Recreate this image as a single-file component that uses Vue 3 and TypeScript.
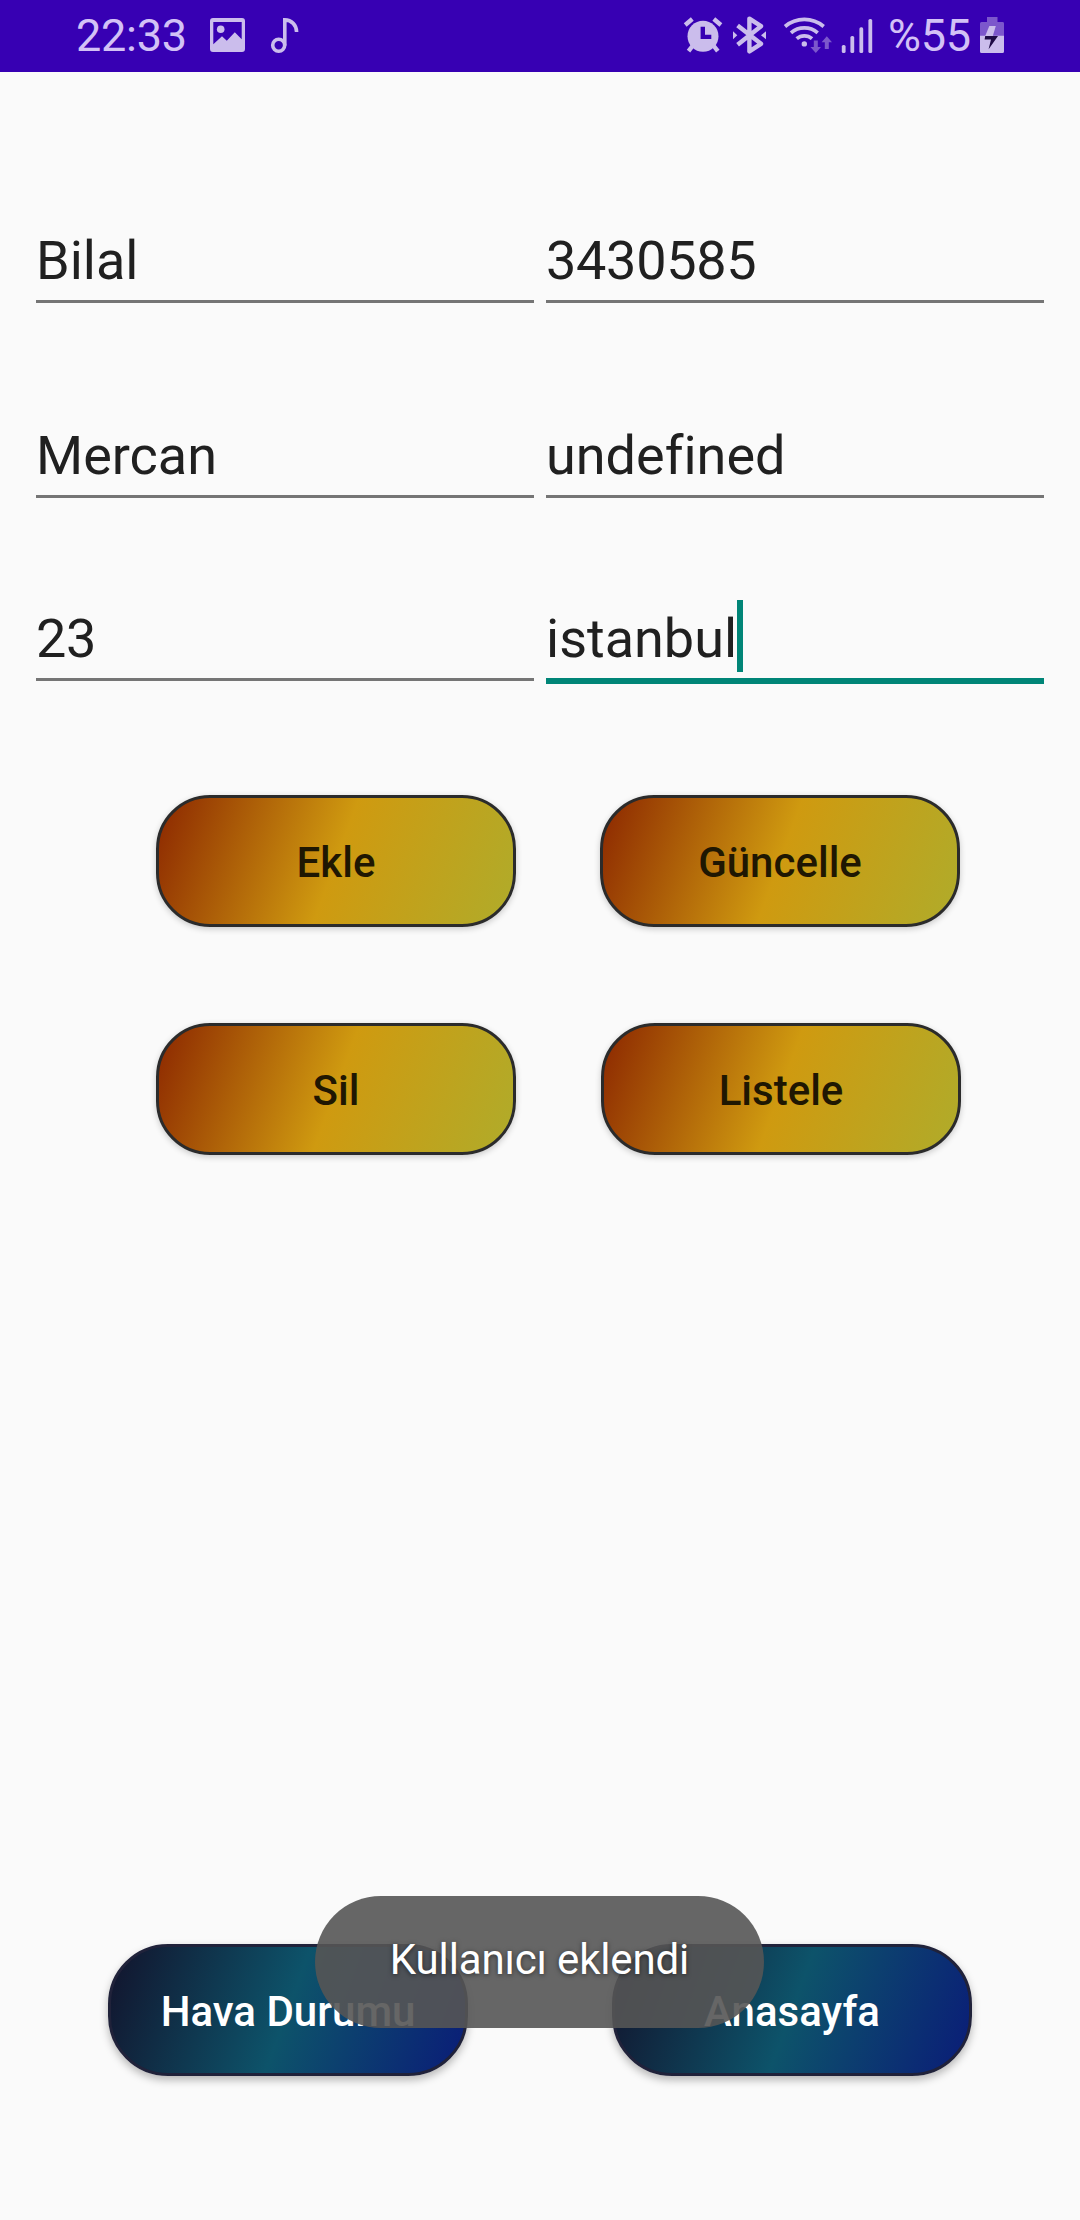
<script setup lang="ts">
interface Field {
  id: string
  value: string
  numeric?: boolean
  focused?: boolean
}

const rows: Field[][] = [
  [{ id: 'name', value: 'Bilal' }, { id: 'phone', value: '3430585', numeric: true }],
  [{ id: 'surname', value: 'Mercan' }, { id: 'mail', value: 'undefined' }],
  [{ id: 'age', value: '23', numeric: true }, { id: 'city', value: 'istanbul', focused: true }],
]
</script>

<template>
  <div class="screen">
    <header class="status">
      <span class="clock">22:33</span>
      <svg class="left-icons" width="90" height="72" viewBox="210 0 90 72">
        <path
          fill="#cbbdec" fill-rule="evenodd"
          d="M213 18H242a3 3 0 0 1 3 3V49a3 3 0 0 1-3 3H213a3 3 0 0 1-3-3V21a3 3 0 0 1 3-3ZM213.3 22V44.3L222 36.3L226.8 40.8L234.8 32.3L241.7 39.3V22Z"
        />
        <circle cx="220.7" cy="29.3" r="3.8" fill="#cbbdec" />
        <g fill="none" stroke="#cbbdec" stroke-width="3.6">
          <circle cx="278.7" cy="45.2" r="6" />
          <path d="M284.8 45.5V19.9C291.5 20 296.6 25 296.6 32" />
        </g>
      </svg>
      <svg class="right-icons" width="200" height="72" viewBox="680 0 200 72">
        <g fill="none" stroke="#cbbdec" stroke-width="4.4">
          <circle cx="703" cy="36.3" r="15.5" fill="#cbbdec" stroke="none" />
          <path d="M685.2 25L692.3 19M713.8 19L720.9 25M692.5 46L688.5 51.2M713.8 46L717.8 51.2" />
          <path d="M702.8 26.7V36.9H711.3" stroke="#3700b3" />
          <path d="M737.6 25.4L761 43.8L749.4 51.4V18.6L761 26.2L737.6 44.8" stroke-linejoin="round" />
        </g>
        <path fill="#cbbdec" d="M733 31.3V39.3L737.3 35.3ZM766 31.3V39.3L761 35.3Z" />
        <g fill="none" stroke="#cbbdec" stroke-width="3.7">
          <path d="M785 26.5A30 30 0 0 1 823.7 26.5" />
          <path d="M791 32.8A20.5 20.5 0 0 1 817.7 32.8" />
          <path d="M796.7 38.7A11.5 11.5 0 0 1 812 38.7" />
        </g>
        <circle cx="804.3" cy="43.9" r="2.7" fill="#cbbdec" />
        <g fill="#7c57cc">
          <path d="M813.8 40.5H817.8V47H821L815.8 53L810.4 47H813.8Z" />
          <path d="M824.8 49H828.8V42.3H832L826.8 36.2L821.6 42.3H824.8Z" />
        </g>
        <g fill="#cbbdec">
          <rect x="841.8" y="45" width="3.8" height="8" rx="1.6" />
          <rect x="850.4" y="36" width="3.8" height="17" rx="1.6" />
          <rect x="859.4" y="27.3" width="3.8" height="25.7" rx="1.6" />
          <rect x="868.4" y="19" width="3.8" height="34" rx="1.6" />
        </g>
      </svg>
      <span class="percent">%55</span>
      <svg class="battery" width="24" height="72" viewBox="980 0 24 72">
        <path fill="#7c57cc" d="M987 17H997.5V22H1002.5A1.5 1.5 0 0 1 1004 23.5V36H980V23.5A1.5 1.5 0 0 1 981.5 22H987Z" />
        <path fill="#cbbdec" d="M980 35.7H1004V51.5A1.5 1.5 0 0 1 1002.5 53H981.5A1.5 1.5 0 0 1 980 51.5Z" />
        <path fill="#cbbdec" d="M989.3 26H995.8L992.8 36H985.2Z" />
        <path fill="#1e0b45" d="M985.2 36H998L988.6 49.3L991 39.5H984.6Z" />
      </svg>
    </header>

    <main class="body">
      <section class="form">
        <div v-for="(row, i) in rows" :key="i" class="row">
          <div
            v-for="f in row"
            :key="f.id"
            class="field"
            :class="{ focused: f.focused, numeric: f.numeric }"
          >
            <span>{{ f.value }}</span><i v-if="f.focused" class="caret"></i>
          </div>
        </div>
      </section>

      <section class="actions">
        <div class="pair">
          <button class="btn amber">Ekle</button>
          <button class="btn amber">Güncelle</button>
        </div>
        <div class="pair wide">
          <button class="btn amber">Sil</button>
          <button class="btn amber">Listele</button>
        </div>
      </section>

      <nav class="bottom">
        <button class="btn navy">Hava Durumu</button>
        <button class="btn navy">Anasayfa</button>
      </nav>
    </main>

    <div class="toast">Kullanıcı eklendi</div>
  </div>
</template>

<style>
body {
  margin: 0;
  background: #fafafa;
}
</style>

<style scoped>
.screen {
  position: relative;
  display: flex;
  flex-direction: column;
  width: 1080px;
  height: 2220px;
  overflow: hidden;
  background: #fafafa;
  font-family: Roboto, "Liberation Sans", sans-serif;
  font-variant-ligatures: none;
}
.status {
  display: flex;
  box-sizing: border-box;
  height: 72px;
  padding: 0 76px;
  background: #3700b3;
  color: #d3c1f6;
  font-size: 45px;
  letter-spacing: -0.27px;
  line-height: 72px;
  white-space: nowrap;
}
.clock {
  width: 134px;
}
.left-icons {
  margin-right: 380px;
}
.left-icons,
.right-icons,
.battery {
  flex: none;
}
.percent {
  width: 92px;
  margin-left: 8px;
}
.body {
  display: flex;
  flex: 1;
  flex-direction: column;
  padding-top: 153px;
}
.form {
  display: flex;
  flex-direction: column;
  padding: 0 36px;
}
.row {
  display: flex;
  align-items: flex-start;
  gap: 12px;
  height: 78px;
  margin-bottom: 117px;
}
.row:nth-child(2) {
  margin-bottom: 105px;
}
.row:last-child {
  margin-bottom: 114px;
}
.field {
  display: flex;
  flex: 1;
  padding-bottom: 3px;
  border-bottom: 3px solid #757575;
  color: #202020;
  font-size: 54px;
  line-height: 72px;
}
.field.numeric {
  letter-spacing: -0.3px;
}
.field.focused {
  border-bottom: 6px solid #008577;
}
.caret {
  width: 6px;
  height: 72px;
  margin-top: -3px;
  margin-bottom: 3px;
  background: #008577;
}
.actions {
  display: flex;
  flex-direction: column;
  gap: 96px;
  padding-left: 156px;
}
.pair {
  display: flex;
  gap: 84px;
}
.pair.wide {
  gap: 85px;
}
.btn {
  box-sizing: border-box;
  width: 360px;
  height: 132px;
  margin: 0;
  padding: 3px 0 0;
  border: 3px solid #2b2b2b;
  font: 500 42px/123px Roboto, "Liberation Sans", sans-serif;
  text-align: center;
}
.amber {
  border-radius: 54px;
  background: linear-gradient(110.1deg, #8b2500 0%, #cf9a10 50%, #afac2b 100%) border-box;
  box-shadow: 0 2px 6px rgba(0, 0, 0, 0.2);
  color: #1f1702;
}
.navy {
  border-color: #20223a;
  border-radius: 60px;
  background: linear-gradient(110.1deg, #12122b 0%, #0d536a 50%, #0a1b78 100%) border-box;
  box-shadow: 0 4px 8px rgba(0, 0, 0, 0.28);
  color: #fff;
}
.bottom {
  display: flex;
  justify-content: space-between;
  margin-top: auto;
  padding: 0 108px 144px;
}
.toast {
  position: absolute;
  top: 1896px;
  left: 315px;
  width: 449px;
  height: 132px;
  border-radius: 66px;
  background: rgba(85, 85, 85, 0.9);
  color: #fff;
  font-size: 42px;
  letter-spacing: -0.15px;
  line-height: 127px;
  text-align: center;
  text-shadow: 0 1px 5px rgba(0, 0, 0, 0.55);
}
</style>
